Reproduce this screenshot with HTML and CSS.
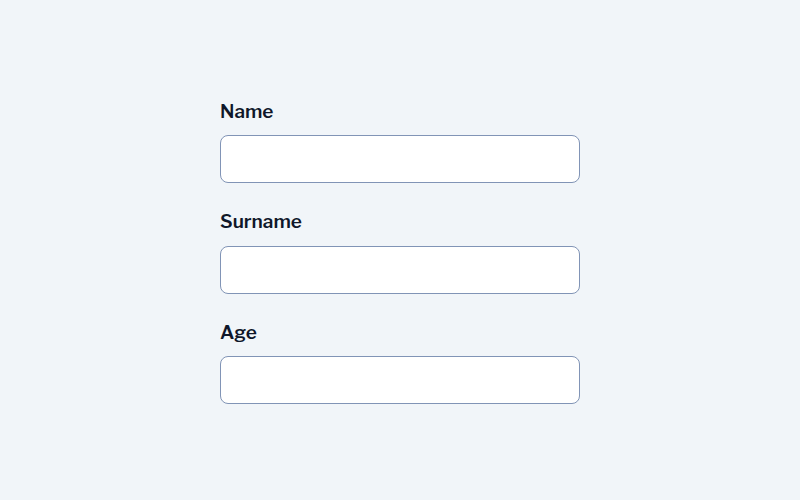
FILE: index.html
```html
<!DOCTYPE html>
<html lang="en">
<head>
<meta charset="utf-8">
<link rel="stylesheet" href="styles.css">
</head>
<body>
<form class="form">
  <div class="field">
    <label class="label" for="name">Name</label>
    <input class="input" id="name" type="text">
  </div>
  <div class="field">
    <label class="label" for="surname">Surname</label>
    <input class="input" id="surname" type="text">
  </div>
  <div class="field">
    <label class="label" for="age">Age</label>
    <input class="input" id="age" type="text">
  </div>
</form>
</body>
</html>
```
FILE: styles.css
```css
html, body {
  margin: 0;
  padding: 0;
  height: 100%;
}
body {
  background: #f1f5f9;
  font-family: "Libre Franklin", Inter, "Noto Sans", sans-serif;
  display: flex;
  align-items: center;
  justify-content: center;
}
.form {
  width: 360px;
  display: flex;
  flex-direction: column;
  gap: 24px;
  padding-top: 1px;
}
.field {
  display: flex;
  flex-direction: column;
  gap: 9px;
}
.label {
  padding-top: 1px;
  font-size: 19px;
  line-height: 1.5;
  font-weight: 600;
  color: #0f172a;
}
.input {
  box-sizing: border-box;
  height: 48px;
  width: 100%;
  margin: 0;
  border: 1px solid #8194b6;
  border-radius: 8px;
  background: #ffffff;
  outline: none;
  padding: 0 12px;
  font-family: inherit;
  font-size: 16px;
}
```
